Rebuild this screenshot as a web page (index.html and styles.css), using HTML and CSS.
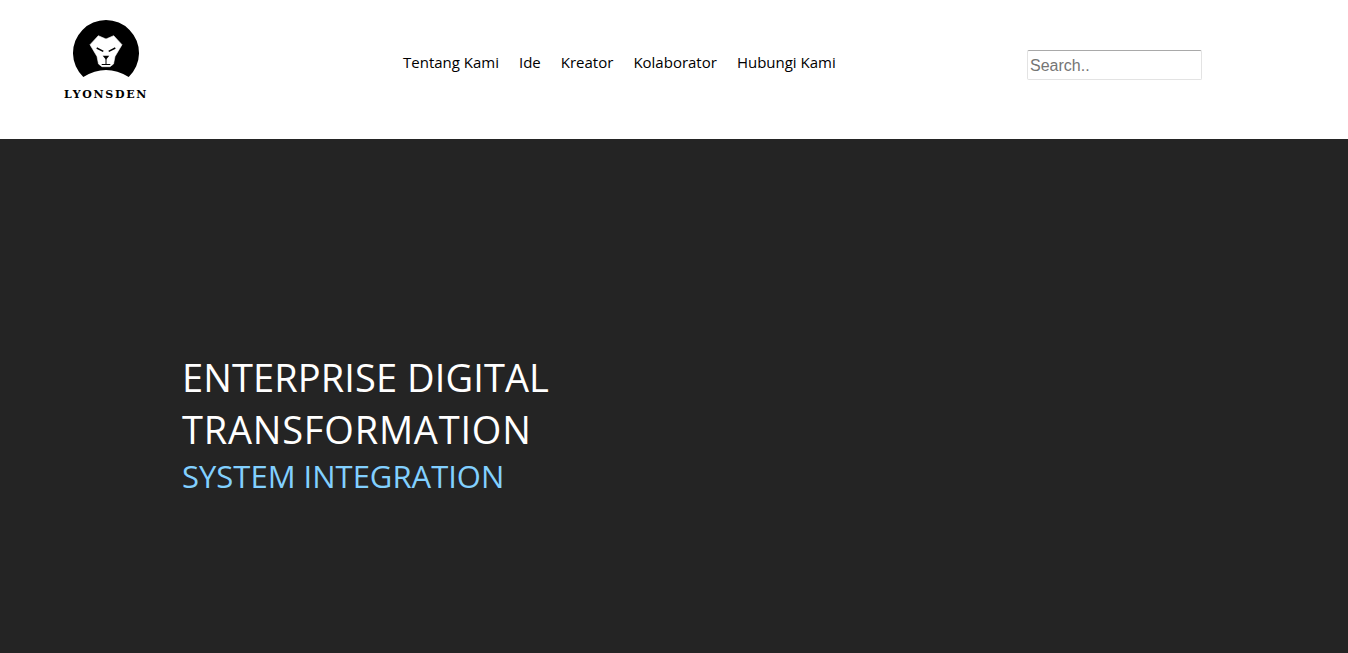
FILE: index.html
```html
<!DOCTYPE html>
<html lang="id">
<head>
<meta charset="utf-8">
<title>Lyonsden</title>
<link rel="stylesheet" href="styles.css">
</head>
<body>
<header class="header">
  <a class="logo" href="#">
    <svg class="logo-mark" viewBox="0 0 68 62" width="68" height="62" aria-hidden="true">
      <path d="M11.300 58A33 33 0 1 1 56.700 58Q34 44 11.300 58Z" fill="#000"/>
      <path d="M26.300 16.700L34 20L41.700 16.700L50 25.700L43 37.500L41.500 45L38 47.700H30L26.500 45L25 37.500L18 25.700Z" fill="#fff" stroke="#fff" stroke-width="0.600" stroke-linejoin="round"/>
      <path d="M24.700 29L31.300 32.300M43.300 29L36.700 32.300" stroke="#000" stroke-width="1.500" fill="none"/>
      <path d="M30.700 36.700H37.300L34 40.700Z" fill="#000"/>
      <path d="M34 40V45.200M29.700 45.500H38.300" stroke="#000" stroke-width="1" fill="none"/>
    </svg>
    <span class="logo-text">LYONSDEN</span>
  </a>
  <nav class="nav">
    <a href="#">Tentang Kami</a>
    <a href="#">Ide</a>
    <a href="#">Kreator</a>
    <a href="#">Kolaborator</a>
    <a href="#">Hubungi Kami</a>
  </nav>
  <input class="search" type="text" placeholder="Search..">
</header>
<main class="hero">
  <h1 class="hero-title">
    <span class="hero-line">ENTERPRISE DIGITAL</span>
    <span class="hero-line hero-line-wide">TRANSFORMATION</span>
  </h1>
  <p class="hero-sub">SYSTEM INTEGRATION</p>
</main>
</body>
</html>
```
FILE: styles.css
```css
* { box-sizing: border-box; }
html, body { margin: 0; height: 100%; }
body {
  font-family: "Open Sans", "Noto Sans", sans-serif;
  background: #fff;
  overflow: hidden;
}
.header {
  height: 139px;
  display: flex;
  align-items: flex-start;
  background: #fff;
}
.logo {
  width: 403px;
  padding: 19px 0 0 64px;
  display: flex;
  flex-direction: column;
  align-items: flex-start;
  text-decoration: none;
  color: #000;
}
.logo-mark { display: block; margin-left: 8px; }
.logo-text {
  font-family: "DejaVu Serif", serif;
  font-weight: 700;
  font-size: 11px;
  line-height: 13px;
  letter-spacing: 1.7px;
  margin-top: 7px;
  white-space: nowrap;
}
.nav {
  display: flex;
  gap: 20px;
  width: 624px;
  padding-top: 52px;
  font-size: 15px;
  line-height: 20px;
}
.nav a { color: #000; text-decoration: none; white-space: nowrap; }
.search {
  width: 175px;
  height: 30px;
  margin: 50px 0 0 0;
  padding: 2px 2px 1px;
  font-family: "Liberation Sans", sans-serif;
  font-size: 16px;
  border-width: 1px;
  border-style: solid;
  border-color: #a9a9a9 #e3e3e3 #e3e3e3 #e3e3e3;
  border-radius: 2px;
  background: #fff;
}
.search::placeholder { color: #757575; }
.hero {
  height: 514px;
  background: #242424;
  padding: 212px 0 0 182px;
}
.hero-title {
  margin: 0;
  font-size: 38px;
  font-weight: 400;
  line-height: 52px;
  color: #fff;
}
.hero-line { display: block; letter-spacing: 0.1px; }
.hero-line-wide { letter-spacing: 0.8px; }
.hero-sub {
  margin: 0;
  font-size: 31px;
  line-height: 42px;
  color: #82d0ff;
}
```
